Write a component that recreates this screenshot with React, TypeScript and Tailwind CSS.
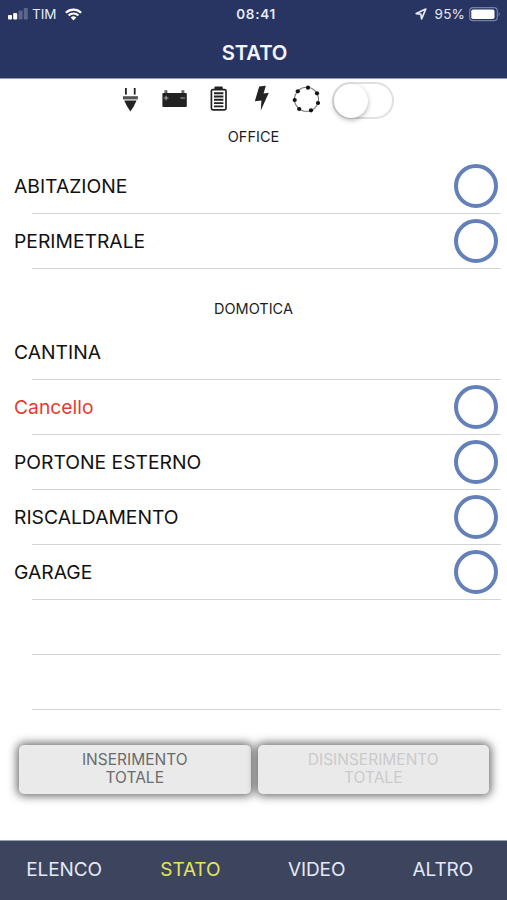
import clsx from 'clsx';
import { useState } from 'react';

interface RowProps {
  name: string;
  alert?: boolean;
  hasCircle?: boolean;
}

const areas: RowProps[] = [
  { name: 'ABITAZIONE', hasCircle: true },
  { name: 'PERIMETRALE', hasCircle: true },
];

const devices: RowProps[] = [
  { name: 'CANTINA' },
  { name: 'Cancello', alert: true, hasCircle: true },
  { name: 'PORTONE ESTERNO', hasCircle: true },
  { name: 'RISCALDAMENTO', hasCircle: true },
  { name: 'GARAGE', hasCircle: true },
  { name: '' },
  { name: '' },
];

const tabs = ['ELENCO', 'STATO', 'VIDEO', 'ALTRO'];

const sensors = [
  [24, 8.7],
  [33, 14.3],
  [34, 24],
  [27, 31.3],
  [15.2, 30],
  [10.7, 21],
  [13.8, 12.3],
];

function Row({ name, alert, hasCircle }: RowProps) {
  return (
    <li className="flex h-[55px] flex-col">
      <div className="flex flex-1 items-center justify-between pr-[9px] pl-3.5">
        <span
          className={clsx(
            'pt-px text-[19.3px]',
            alert ? 'text-[#e23c30]' : 'text-[#111]',
          )}
        >
          {name}
        </span>
        {hasCircle && (
          <button
            type="button"
            aria-label={name}
            className="size-11 rounded-full border-4 border-[#6480b8]"
          />
        )}
      </div>
      <div className="mr-1.5 ml-8 h-px bg-[#d2d3d3]" />
    </li>
  );
}

function StatusBar() {
  return (
    <div className="grid h-7 grid-cols-3 items-center text-[13.5px] text-[#e6ebfa]">
      <div className="flex items-center pl-2">
        <svg width="20" height="12" viewBox="0 0 20 12" fill="#fff">
          <rect x="0" y="7" width="4" height="4.5" rx="1" />
          <rect x="5.2" y="5" width="4" height="6.5" rx="1" />
          <g fill="#5c678e">
            <rect x="10.6" y="2.5" width="4" height="9" rx="1" />
            <rect x="15.8" y="0" width="4" height="11.5" rx="1" />
          </g>
        </svg>
        <span className="ml-1">TIM</span>
        <svg className="ml-2" width="17" height="13" viewBox="0 0 17 13">
          <g fill="none" stroke="#fff" strokeWidth="2.2">
            <path d="M0.9 4.7 A10.8 10.8 0 0 1 16.1 4.7" />
            <path d="M3.6 7.5 A7 7 0 0 1 13.4 7.5" />
          </g>
          <path d="M5.7 9.6 A4 4 0 0 1 11.3 9.6 L8.5 12.4 Z" fill="#fff" />
        </svg>
      </div>
      <span className="pl-[5px] text-center font-semibold tracking-[0.7px]">
        08:41
      </span>
      <div className="flex items-center justify-end pr-1.5">
        <svg width="12" height="12" viewBox="0 0 12 12">
          <path
            d="M10.8 1 L1.2 5.6 L5.8 6.2 L6.6 10.9 Z"
            fill="none"
            stroke="#e6ebfa"
            strokeWidth="1.7"
            strokeLinejoin="round"
          />
        </svg>
        <span className="ml-2 tracking-[0.2px]">95%</span>
        <svg className="ml-1" width="32" height="15" viewBox="0 0 32 15">
          <rect
            x="0.7"
            y="0.7"
            width="27.6"
            height="13"
            rx="3.4"
            fill="none"
            stroke="#7580a5"
            strokeWidth="1.2"
          />
          <rect x="2.3" y="2.4" width="23.2" height="9.6" rx="1.8" fill="#fff" />
          <path d="M29.6 5 Q31.8 7.2 29.6 9.4 Z" fill="#7580a5" />
        </svg>
      </div>
    </div>
  );
}

function SystemIcons() {
  return (
    <>
      {/* rete elettrica */}
      <svg width="44" height="42" viewBox="0 0 44 42" fill="#222">
        <rect x="17" y="9" width="1.8" height="6.6" />
        <rect x="25.8" y="9" width="1.8" height="6.6" />
        <rect x="14.9" y="17.2" width="15" height="3.2" fill="#555" />
        <path d="M16.2 21.6 H28.6 L25.8 27.3 L22.4 32.6 L19 27.3 Z" />
      </svg>
      {/* batteria centrale */}
      <svg width="44" height="42" viewBox="0 0 44 42">
        <rect x="12.4" y="11.2" width="3" height="3" fill="#666" />
        <rect x="29.4" y="11.2" width="3" height="3" fill="#666" />
        <rect x="10.4" y="14" width="24.4" height="14" rx="1" fill="#222" />
        <path
          d="M11.8 19 H16.4 M14.1 16.8 V21.2 M28.4 19 H33"
          stroke="#aaa"
          strokeWidth="1.1"
        />
      </svg>
      {/* batteria sensori */}
      <svg width="44" height="42" viewBox="0 0 44 42">
        <rect x="18.4" y="7.6" width="8.4" height="4" rx="1.2" fill="#222" />
        <rect
          x="15.4"
          y="10.6"
          width="14.6"
          height="20.2"
          rx="1.5"
          fill="#fff"
          stroke="#222"
          strokeWidth="1.7"
        />
        <path
          d="M18 14.2 H27.4 M18 17.5 H27.4 M18 20.8 H27.4 M18 24.1 H27.4 M18 27.4 H27.4"
          stroke="#222"
          strokeWidth="1.9"
        />
      </svg>
      {/* guasto */}
      <svg width="44" height="42" viewBox="0 0 44 42" fill="#222">
        <path d="M19.2 7.6 L25.8 6.8 L23.6 14.4 L28.8 13.8 L20.8 31.4 L21.4 21.4 L14.8 22.2 Z" />
      </svg>
      {/* perimetro */}
      <svg width="44" height="42" viewBox="0 0 44 42" fill="#111">
        <circle
          cx="22.5"
          cy="20.3"
          r="12"
          fill="none"
          stroke="#777"
          strokeWidth="1.1"
        />
        {sensors.map(([x, y]) => (
          <circle key={x} cx={x} cy={y} r="2.1" />
        ))}
      </svg>
    </>
  );
}

export default function App() {
  const [activeTab, setActiveTab] = useState('STATO');
  const [enabled, setEnabled] = useState(false);

  return (
    <div className="flex h-[900px] w-[507px] flex-col bg-white font-['Inter',sans-serif]">
      <header className="h-[79px] border-b border-[#8d9bc0] bg-[#283462]">
        <StatusBar />
        <h1 className="mt-2.5 pl-0.5 text-center text-[20.3px] leading-[30px] font-semibold tracking-[-0.1px] text-[#f4f6ff]">
          STATO
        </h1>
      </header>

      <main className="flex flex-1 flex-col">
        <div className="flex h-[42px] items-start pl-[108px]">
          <SystemIcons />
          <button
            type="button"
            role="switch"
            aria-checked={enabled}
            aria-label="Perimetro"
            onClick={() => setEnabled(!enabled)}
            className={clsx(
              'mt-[3px] ml-1 flex h-[37px] w-[62px] items-center rounded-full border-2 border-[#e0e0e0]',
              enabled && 'justify-end bg-green-400',
            )}
          >
            <span className="size-[34px] rounded-full bg-white shadow-[0_2px_5px_0_rgba(0,0,0,0.3)]" />
          </button>
        </div>

        <h2 className="h-[38px] pt-[5px] text-center text-[14.5px] leading-[22px] text-[#1c1c1c]">
          OFFICE
        </h2>
        <ul>
          {areas.map((area) => (
            <Row key={area.name} {...area} />
          ))}
        </ul>

        <h2 className="h-[55.5px] pt-7 text-center text-[14.5px] leading-[23px] text-[#1c1c1c]">
          DOMOTICA
        </h2>
        <ul>
          {devices.map((device, index) => (
            <Row key={index} {...device} />
          ))}
        </ul>

        <div className="mt-[35px] flex gap-[7px] pr-[18px] pl-[19px] text-[15.5px] leading-[18.5px]">
          <button
            type="button"
            className="h-[49.5px] flex-1 rounded-[5px] bg-[#eaeaea] text-[#6b6b6b] shadow-[0_0_10px_2px_rgba(0,0,0,0.6)]"
          >
            INSERIMENTO
            <br />
            TOTALE
          </button>
          <button
            type="button"
            disabled
            className="h-[49.5px] flex-1 rounded-[5px] bg-[#eaeaea] text-[#cbcbcb] shadow-[0_0_10px_2px_rgba(0,0,0,0.6)]"
          >
            DISINSERIMENTO
            <br />
            TOTALE
          </button>
        </div>
      </main>

      <nav className="grid h-[60px] grid-cols-4 border-t border-[#9a9fae] bg-[#3d445e] pr-px pl-px">
        {tabs.map((tab) => (
          <button
            key={tab}
            type="button"
            onClick={() => setActiveTab(tab)}
            className={clsx(
              'text-[19px] tracking-[-0.1px]',
              activeTab === tab ? 'text-[#e4e65a]' : 'text-[#e4e9f7]',
            )}
          >
            {tab}
          </button>
        ))}
      </nav>
    </div>
  );
}
